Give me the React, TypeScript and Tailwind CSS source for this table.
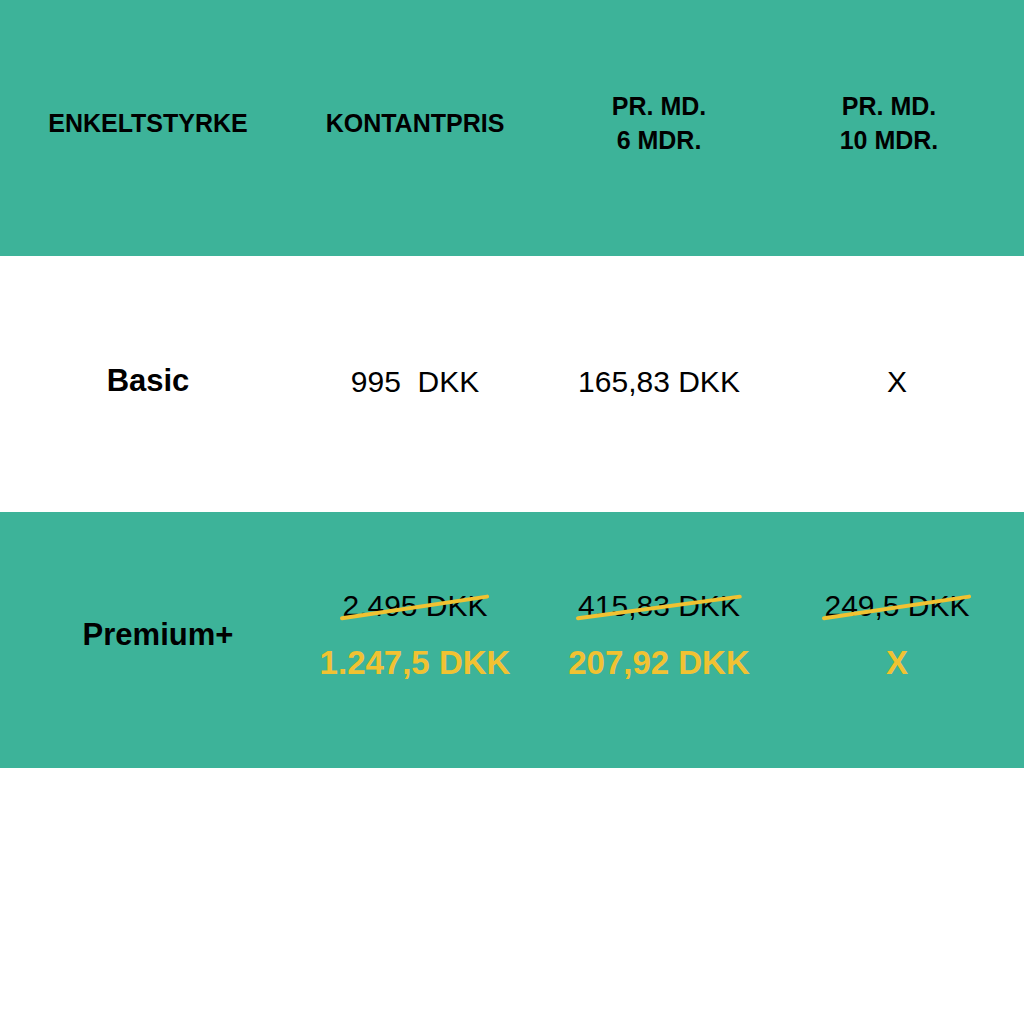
import React from "react";

const GREEN = "bg-[#3db399]";

function Struck({ children }: { children: React.ReactNode }) {
  return (
    <span className="relative inline-block">
      <span className="text-[30px] leading-[36px] text-black">{children}</span>
      <svg
        className="pointer-events-none absolute left-0 top-0 h-full w-full overflow-visible"
        viewBox="0 0 100 100"
        preserveAspectRatio="none"
      >
        <line
          x1="0"
          y1="84"
          x2="100"
          y2="24"
          stroke="#f1c232"
          strokeWidth="4"
          strokeLinecap="round"
          vectorEffect="non-scaling-stroke"
        />
      </svg>
    </span>
  );
}

function PremiumCell({ old, price }: { old: string; price: string }) {
  return (
    <div className="flex flex-col items-center gap-[20px] pb-[10px]">
      <Struck>{old}</Struck>
      <span className="text-[33px] font-bold leading-[38px] text-[#f1c232]">{price}</span>
    </div>
  );
}

export default function App() {
  const row = "grid h-[256px] grid-cols-[296px_238px_250px_226px] items-center text-center";

  return (
    <div className="min-h-[1024px] w-[1024px] bg-white font-['Liberation_Sans',Arial,sans-serif] text-black">
      {/* header */}
      <div className={`${row} ${GREEN} pb-[10px] text-[25px] font-bold leading-[34px]`}>
        <div>ENKELTSTYRKE</div>
        <div>KONTANTPRIS</div>
        <div>
          PR. MD.
          <br />6 MDR.
        </div>
        <div className="pr-4">
          PR. MD.
          <br />
          10 MDR.
        </div>
      </div>

      {/* basic */}
      <div className={`${row} bg-white pb-[6px]`}>
        <div className="text-[31px] font-bold">Basic</div>
        <div className="whitespace-pre text-[30px]">995  DKK</div>
        <div className="text-[30px]">165,83 DKK</div>
        <div className="text-[30px]">X</div>
      </div>

      {/* premium */}
      <div className={`${row} ${GREEN}`}>
        <div className="pb-[10px] pl-5 text-[31px] font-bold">Premium+</div>
        <PremiumCell old="2.495 DKK" price="1.247,5 DKK" />
        <PremiumCell old="415,83 DKK" price="207,92 DKK" />
        <PremiumCell old="249,5 DKK" price="X" />
      </div>
    </div>
  );
}
